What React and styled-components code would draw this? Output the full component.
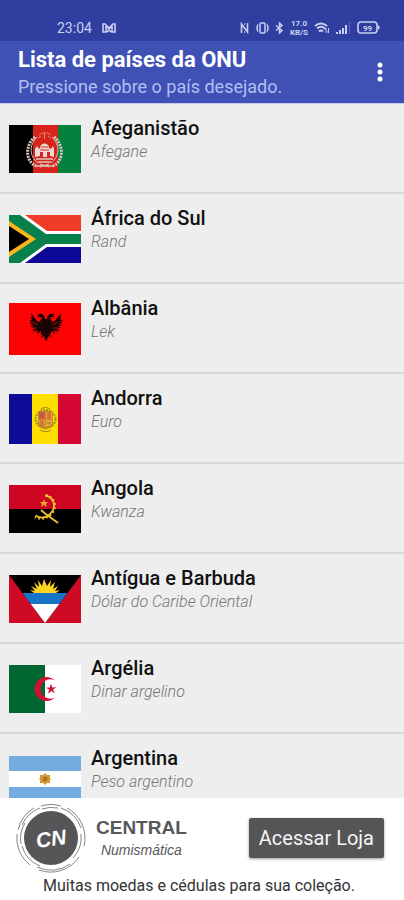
import React from 'react';
import styled, { createGlobalStyle } from 'styled-components';

const GlobalStyle = createGlobalStyle`
  *, *::before, *::after {
    box-sizing: border-box;
  }
  body {
    margin: 0;
    background: #eeeeee;
    font-family: Roboto, "Liberation Sans", sans-serif;
  }
`;

const Screen = styled.div`
  display: flex;
  flex-direction: column;
  height: 100vh;
`;

const StatusBar = styled.div`
  display: flex;
  align-items: center;
  justify-content: space-between;
  flex: none;
  height: 41px;
  padding: 14px 24px 0 57px;
  background: #303f9f;
  color: #c9cff2;
`;

const StatusGroup = styled.div`
  display: flex;
  align-items: center;
  gap: ${props => props.$gap};
`;

const Clock = styled.span`
  font-size: 14px;
  line-height: 16px;
`;

const Speed = styled.span`
  display: flex;
  flex-direction: column;
  align-items: center;
  font-size: 8px;
  font-weight: 700;
  line-height: 9px;
`;

const AppBar = styled.header`
  display: flex;
  align-items: center;
  justify-content: space-between;
  flex: none;
  height: 63px;
  padding: 0 12px 0 18px;
  background: #3f51b5;
  border-bottom: 1px solid #c3c9ee;
`;

const Title = styled.h1`
  margin: 0;
  padding-top: 2px;
  color: #ffffff;
  font-size: 22px;
  font-weight: 700;
  line-height: 28px;
`;

const Subtitle = styled.p`
  margin: 0;
  color: #b3bef0;
  font-size: 18px;
  line-height: 26px;
`;

const MenuButton = styled.button`
  display: flex;
  justify-content: center;
  width: 24px;
  padding: 0;
  border: 0;
  background: none;
  color: #ffffff;
  cursor: pointer;
`;

const CountryList = styled.ul`
  flex: 1;
  min-height: 0;
  margin: 0;
  padding: 0;
  overflow-y: auto;
  list-style: none;
  scrollbar-width: none;
`;

const CountryRow = styled.li`
  display: flex;
  align-items: center;
  gap: 10px;
  height: 90px;
  padding: 2px 0 0 9px;
  border-bottom: 2px solid #d8d8d8;
`;

const FlagSvg = styled.svg`
  display: block;
  flex: none;
`;

const CountryText = styled.div`
  align-self: flex-start;
  padding-top: 10px;
`;

const CountryName = styled.h2`
  margin: 0;
  color: #111111;
  font-size: 20px;
  font-weight: 500;
  line-height: 24px;
`;

const Currency = styled.p`
  margin: 0;
  color: #757575;
  font-size: 16px;
  font-style: italic;
  font-weight: 300;
  line-height: 24px;
`;

const Banner = styled.footer`
  flex: none;
  padding: 3px 20px 3px 14px;
  background: #ffffff;
`;

const BannerTop = styled.div`
  display: flex;
  align-items: center;
  justify-content: space-between;
`;

const Brand = styled.div`
  display: flex;
  align-items: center;
  gap: 8px;
`;

const BrandText = styled.div`
  padding-top: 2px;
  color: #58585a;
  font-family: "Liberation Sans", Arial, sans-serif;
  text-align: center;
`;

const BrandName = styled.div`
  font-size: 19px;
  font-weight: 700;
  line-height: 22px;
`;

const BrandTag = styled.div`
  font-size: 14px;
  font-style: italic;
  line-height: 22px;
`;

const StoreButton = styled.button`
  height: 40px;
  padding: 0 10px;
  border: 0;
  border-radius: 2px;
  background: #555557;
  box-shadow: 0 1px 3px rgba(0, 0, 0, 0.4);
  color: #f5f5f5;
  font-family: inherit;
  font-size: 20px;
  cursor: pointer;
`;

const Slogan = styled.p`
  margin: 0;
  color: #333333;
  font-size: 16px;
  line-height: 22px;
  text-align: center;
`;

const Flag = ({ height, children }) => (
  <FlagSvg width="72" height={height} viewBox={`0 0 72 ${height}`} aria-hidden="true">
    {children}
  </FlagSvg>
);

const Afghanistan = () => (
  <Flag height={48}>
    <rect width="24" height="48" fill="#000" />
    <rect x="24" width="25" height="48" fill="#d8231a" />
    <rect x="49" width="23" height="48" fill="#04813c" />
    <g fill="none" stroke="#d9c6bf">
      <path d="M26 12C16 20 16 36 27 41M45 12c10 8 10 24-1 29" strokeWidth="3" strokeDasharray="2 1" />
      <path d="M28 12c-8 8-8 19 1 26M43 12c8 8 8 19-1 26" strokeWidth="1" />
      <path d="M30 10c4-3 8-3 12 0M29 13l3-2M42 13l-3-2M35.500 8v6" strokeWidth="1" opacity=".6" />
      <path d="M27 34h17M29 37h13M26 41h19M31 39l9 3M40 39l-9 3" strokeWidth="1.300" />
    </g>
    <path d="M26 32v-8l2-3 2 3 1-1c0-6 9-6 9 0l2 1 2-3 1 3v8l-4-1v-4h-3v5h-4v-5h-3v4z" fill="#eadad5" />
    <path d="M32 22h7M31 25h9" stroke="#d8231a" />
  </Flag>
);

const SouthAfrica = () => (
  <Flag height={48}>
    <rect width="72" height="48" fill="#fff" />
    <path d="M16 0h56v16H38z" fill="#ef3c2b" />
    <path d="M16 48h56V32H38z" fill="#0c0794" />
    <path d="M0 0h11l26 19h35v10H37L11 48H0z" fill="#08804c" />
    <path d="M0 6l27 18L0 42z" fill="#f9b51b" />
    <path d="M0 11l20 13L0 37z" fill="#000" />
  </Flag>
);

const Albania = () => (
  <Flag height={52}>
    <rect width="72" height="52" fill="#fe0303" />
    <path
      d="M36 16c0-4-4-7-8-4l3 0-3 2 4 0 1 2-2 1 1 2-4-1-6-8 1 5-2-1 2 3-3 0 3 2-3 1 4 1-3 2 4 0-3 2 4 0-3 3 4-1-3 3 5-3-1 4 4-3 0 4 2-1-2 4 3-2 1 4 1 1 1-1 1-4 3 2-2-4 2 1 0-4 4 3-1-4 5 3-3-3 4 1-3-3 4 0-3-2 4 0-3-2 4-1-3-1 3-2-3 0 2-3-2 1 1-5-6 8-4 1 1-2-2-1 1-2 4 0-3-2 3 0c-4-3-8 0-8 4z"
      fill="#190505"
    />
    <path
      d="M29 22l-6-3M28 25l-6 0M28 28l-5 2M43 22l6-3M44 25l6 0M44 28l5 2M32 31l-4 3M40 31l4 3"
      stroke="#c00808"
      strokeWidth=".8"
    />
  </Flag>
);

const Andorra = () => (
  <Flag height={50}>
    <rect width="23" height="50" fill="#100b97" />
    <rect x="23" width="26" height="50" fill="#fedf00" />
    <rect x="49" width="23" height="50" fill="#d50733" />
    <ellipse cx="36.500" cy="25" rx="10" ry="9" fill="none" stroke="#9d8c25" strokeWidth="2" strokeDasharray="2 1" />
    <path d="M29 17h15v13c0 4-5 4-7.500 6C34 34 29 34 29 30z" fill="#c58b25" />
    <path d="M30 18h6v7h-6z" fill="#d25b3f" />
    <path d="M37 18h6v7h-6zM30 26h6v6l-5-1zM37 26h6v4l-6 3z" fill="#e9a53c" />
    <path d="M33 19v5M39 18v7M41 18v7M32 26v6M34 26v6" stroke="#c54634" />
    <path d="M32 21l2-2M38 29h4M31 36c4 2 8 2 11 0M32 15c3-2 6-2 9 0" fill="none" stroke="#8f7a3c" />
  </Flag>
);

const Angola = () => (
  <Flag height={48}>
    <rect width="72" height="24" fill="#cd0523" />
    <rect y="24" width="72" height="24" fill="#000" />
    <g fill="none" stroke="#efc22e">
      <path d="M36 10.500c8 1 11 9 7.500 15.500-3 5-6 6-9 6.500-3 .3-6-.5-8-2" strokeWidth="1.800" />
      <path d="M37 10.500c8 2 11 10 7 16-4 7-12 8-18 5.500" strokeWidth="3" strokeDasharray="1.500 2.500" />
      <path d="M32 25c5 5 11 8 17 13" strokeWidth="1.800" />
    </g>
    <path d="M35 14l1 3 3 0-2 2 1 3-3-2-3 2 1-3-2-2 3 0z" fill="#f3a62d" />
  </Flag>
);

const Antigua = () => (
  <Flag height={48}>
    <rect width="72" height="48" fill="#cf0a24" />
    <path d="M0 0h72L36 48z" fill="#000" />
    <path d="M13.500 18h45l-8.250 11h-28.500z" fill="#1673c5" />
    <path d="M21.750 29h28.500L36 48z" fill="#fff" />
    <path
      d="M25 18l-4-3 5 1-4-5 6 3-3-7 5 5-1-7 4 6 2-7 3 7 4-6-1 7 5-5-2 7 5-3-3 5 5-1-4 3z"
      fill="#fcd420"
    />
  </Flag>
);

const Algeria = () => (
  <Flag height={48}>
    <rect width="36" height="48" fill="#006632" />
    <rect x="36" width="36" height="48" fill="#fff" />
    <path d="M46 15.500a12 12 0 1 0 0 17 9.700 9.700 0 1 1 0-17z" fill="#d21034" />
    <path d="M42 18.500l1.300 4 4.200-.2-3.500 2.200 2 4-3.500-2.500-3.500 2.700 1.200-4.200-3.400-1.800 4-.2z" fill="#d21034" />
  </Flag>
);

const Argentina = () => (
  <Flag height={46}>
    <rect width="72" height="46" fill="#74acdf" />
    <rect y="15" width="72" height="16" fill="#fff" />
    <path d="M36 17l2 2 3 0 0 3 1 1-1 1 0 3-3 0-2 2-2-2-3 0 0-3-1-1 1-1 0-3 3 0z" fill="#d69c32" />
    <circle cx="36" cy="23" r="2.500" fill="#ad7426" />
  </Flag>
);

const NfcIcon = () => (
  <svg width="10" height="12" viewBox="0 0 10 12" fill="none" stroke="currentColor" strokeWidth="1.600" aria-hidden="true">
    <path d="M1.500 11V2l6 8V1M4 2h1M4 10h1" />
  </svg>
);

const VibrateIcon = () => (
  <svg width="13" height="12" viewBox="0 0 13 12" fill="none" stroke="currentColor" strokeWidth="1.500" aria-hidden="true">
    <rect x="4" y="1" width="5" height="10" rx="1" />
    <path d="M2 2.500Q0 6 2 9.500M11 2.500q2 3.500 0 7" />
  </svg>
);

const BluetoothIcon = () => (
  <svg width="9" height="12" viewBox="0 0 9 12" fill="none" stroke="currentColor" strokeWidth="1.500" aria-hidden="true">
    <path d="M1 3.500l6 5L4.500 11V1L7 3.500l-6 5" />
  </svg>
);

const WifiIcon = () => (
  <svg width="16" height="12" viewBox="0 0 16 12" fill="none" stroke="currentColor" strokeWidth="1.800" aria-hidden="true">
    <path d="M1 4q6-5 12 0M3 6.500q4-3.500 8 0M5 9.500q2-2 4 0" />
    <path d="M12 11V6M10.500 7.500L12 6M14.500 6v5M13.500 9.500l1 1.500" strokeWidth="1" />
  </svg>
);

const SignalIcon = () => (
  <svg width="15" height="12" viewBox="0 0 15 12" fill="currentColor" aria-hidden="true">
    <path d="M0 10h2v2H0zM3 8h2v4H3zM6 6h2v6H6zM9 3h2v9H9z" />
    <path d="M13 0h1v12h-1z" opacity=".3" />
  </svg>
);

const BatteryIcon = () => (
  <svg width="23" height="13" viewBox="0 0 23 13" fill="none" aria-hidden="true">
    <rect x="1" y="1" width="19" height="11" rx="3" stroke="currentColor" strokeWidth="1.600" />
    <path d="M21 4l2 2.500L21 9z" fill="currentColor" />
    <text x="10.500" y="9.500" fill="currentColor" fontSize="8" fontWeight="700" textAnchor="middle">99</text>
  </svg>
);

const MailIcon = () => (
  <svg width="14" height="10" viewBox="0 0 14 10" fill="none" stroke="currentColor" strokeWidth="1.600" aria-hidden="true">
    <path d="M1 1v8h3V3l3 3 3-3v6h3V1h-2L7 5 3 1zM5 9l2-2 2 2" />
  </svg>
);

const BrandLogo = () => (
  <svg width="74" height="74" viewBox="0 0 74 74" role="img" aria-label="CN">
    <circle cx="37" cy="37" r="27" fill="#565658" />
    <g fill="none" stroke="#858588" strokeWidth="1">
      <path d="M8 24A32 32 0 0 1 26 7" />
      <path d="M4 29A34 34 0 0 1 20 7" />
      <path d="M27 5A34 34 0 0 1 47 5" />
      <path d="M28 8A31 31 0 0 1 44 7" />
      <path d="M47 7A32 32 0 0 1 67 27" />
      <path d="M53 7A34 34 0 0 1 70 45" />
      <path d="M67 33A30 30 0 0 1 59 57" />
      <path d="M65 56A34 34 0 0 1 25 69" />
      <path d="M56 63A32 32 0 0 1 23 66" />
      <path d="M26 65A30 30 0 0 1 8 45" />
      <path d="M16 64A34 34 0 0 1 3 33" />
      <path d="M7 43A30 30 0 0 1 11 22" />
    </g>
    <text
      x="37"
      y="45"
      transform="rotate(-8 37 37)"
      fill="#ffffff"
      fontFamily="Liberation Sans, Arial, sans-serif"
      fontSize="21"
      fontWeight="700"
      fontStyle="italic"
      textAnchor="middle"
    >
      CN
    </text>
  </svg>
);

const countries = [
  { name: 'Afeganistão', currency: 'Afegane', flag: Afghanistan },
  { name: 'África do Sul', currency: 'Rand', flag: SouthAfrica },
  { name: 'Albânia', currency: 'Lek', flag: Albania },
  { name: 'Andorra', currency: 'Euro', flag: Andorra },
  { name: 'Angola', currency: 'Kwanza', flag: Angola },
  { name: 'Antígua e Barbuda', currency: 'Dólar do Caribe Oriental', flag: Antigua },
  { name: 'Argélia', currency: 'Dinar argelino', flag: Algeria },
  { name: 'Argentina', currency: 'Peso argentino', flag: Argentina },
];

export default function App() {
  return (
    <Screen>
      <GlobalStyle />
      <StatusBar>
        <StatusGroup $gap="10px">
          <Clock>23:04</Clock>
          <MailIcon />
        </StatusGroup>
        <StatusGroup $gap="6px">
          <NfcIcon />
          <VibrateIcon />
          <BluetoothIcon />
          <Speed>
            <span>17.0</span>
            <span>KB/S</span>
          </Speed>
          <WifiIcon />
          <SignalIcon />
          <BatteryIcon />
        </StatusGroup>
      </StatusBar>
      <AppBar>
        <div>
          <Title>Lista de países da ONU</Title>
          <Subtitle>Pressione sobre o país desejado.</Subtitle>
        </div>
        <MenuButton aria-label="Menu">
          <svg width="6" height="20" viewBox="0 0 6 20" fill="currentColor">
            <circle cx="3" cy="3" r="2.500" />
            <circle cx="3" cy="10" r="2.500" />
            <circle cx="3" cy="17" r="2.500" />
          </svg>
        </MenuButton>
      </AppBar>
      <CountryList>
        {countries.map(({ name, currency, flag: CountryFlag }) => (
          <CountryRow key={name}>
            <CountryFlag />
            <CountryText>
              <CountryName>{name}</CountryName>
              <Currency>{currency}</Currency>
            </CountryText>
          </CountryRow>
        ))}
      </CountryList>
      <Banner>
        <BannerTop>
          <Brand>
            <BrandLogo />
            <BrandText>
              <BrandName>CENTRAL</BrandName>
              <BrandTag>Numismática</BrandTag>
            </BrandText>
          </Brand>
          <StoreButton>Acessar Loja</StoreButton>
        </BannerTop>
        <Slogan>Muitas moedas e cédulas para sua coleção.</Slogan>
      </Banner>
    </Screen>
  );
}
